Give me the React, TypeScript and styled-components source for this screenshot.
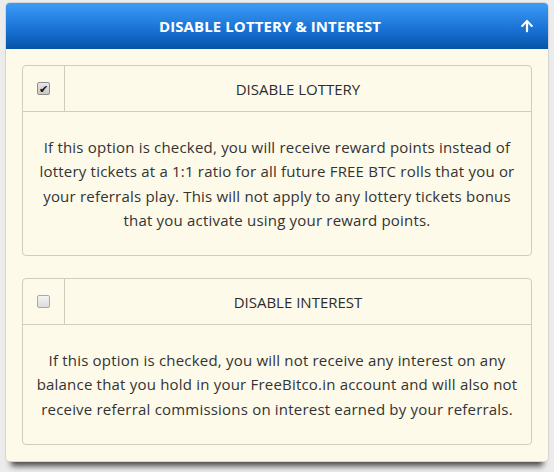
import styled, { createGlobalStyle } from "styled-components";
import { FaArrowUp } from "react-icons/fa";

const GlobalStyle = createGlobalStyle`
  body {
    margin: 0;
    background: #ececec;
    font-family: "Open Sans", "DejaVu Sans", sans-serif;
  }
`;

const Page = styled.div`
  padding: 3px 0 0 6px;
  height: 469px;
`;

const Panel = styled.section`
  width: 542px;
  border-radius: 4px;
  background: #fdfaea;
  box-shadow: 0 0 0 1px #d6d6d6, 0 10px 6px -5px rgba(0, 0, 0, 0.7);
`;

const PanelHeader = styled.header`
  display: flex;
  align-items: center;
  height: 46px;
  padding: 0 14px 0 14px;
  border-radius: 4px 4px 0 0;
  background: linear-gradient(to bottom, #3d9bf6 0%, #1a74d6 55%, #0553a8 100%);
  color: #fff;
`;

const Title = styled.h2`
  flex: 1;
  margin: 0;
  text-align: center;
  font-size: 15px;
  font-weight: 700;
  letter-spacing: 0.1px;
`;

const Toggle = styled.span`
  display: flex;
  width: 14px;
  justify-content: center;
  font-size: 14px;
`;

const PanelBody = styled.div`
  display: flex;
  flex-direction: column;
  gap: 22px;
  padding: 16px;
`;

const OptionBox = styled.div`
  border: 1px solid #cfccc0;
  border-radius: 4px;
`;

const OptionHead = styled.label`
  display: grid;
  grid-template-columns: 42px 1fr;
  height: 45px;
  border-bottom: 1px solid #cfccc0;
`;

const CheckCell = styled.span`
  display: flex;
  align-items: center;
  justify-content: center;
  border-right: 1px solid #cfccc0;
`;

const Check = styled.span<{ $on?: boolean }>`
  display: flex;
  align-items: center;
  justify-content: center;
  width: 11px;
  height: 11px;
  border: 1px solid ${(p) => (p.$on ? "#8d8d8d" : "#a9a9a9")};
  border-radius: 2px;
  background: ${(p) =>
    p.$on
      ? "linear-gradient(#e6e6e6, #c9c9c9)"
      : "linear-gradient(#f4f4f4, #dcdcdc)"};
  color: #111;
  font-size: 11px;
  font-weight: 700;
  line-height: 1;
`;

const OptionName = styled.span`
  display: flex;
  align-items: center;
  justify-content: center;
  font-size: 15px;
  color: #2c2c2c;
`;

const OptionText = styled.p`
  margin: 0;
  padding: 23px 11px;
  text-align: center;
  font-size: 15px;
  letter-spacing: 0.2px;
  line-height: 24.3px;
  color: #333;
`;

const options = [
  {
    name: "DISABLE LOTTERY",
    on: true,
    text: "If this option is checked, you will receive reward points instead of lottery tickets at a 1:1 ratio for all future FREE BTC rolls that you or your referrals play. This will not apply to any lottery tickets bonus that you activate using your reward points.",
  },
  {
    name: "DISABLE INTEREST",
    on: false,
    text: "If this option is checked, you will not receive any interest on any balance that you hold in your FreeBitco.in account and will also not receive referral commissions on interest earned by your referrals.",
  },
];

export default function App() {
  return (
    <Page>
      <GlobalStyle />
      <Panel>
        <PanelHeader>
          <Title>DISABLE LOTTERY &amp; INTEREST</Title>
          <Toggle>
            <FaArrowUp />
          </Toggle>
        </PanelHeader>
        <PanelBody>
          {options.map((o) => (
            <OptionBox key={o.name}>
              <OptionHead>
                <CheckCell>
                  <Check $on={o.on}>{o.on ? "✔" : ""}</Check>
                </CheckCell>
                <OptionName>{o.name}</OptionName>
              </OptionHead>
              <OptionText>{o.text}</OptionText>
            </OptionBox>
          ))}
        </PanelBody>
      </Panel>
    </Page>
  );
}
